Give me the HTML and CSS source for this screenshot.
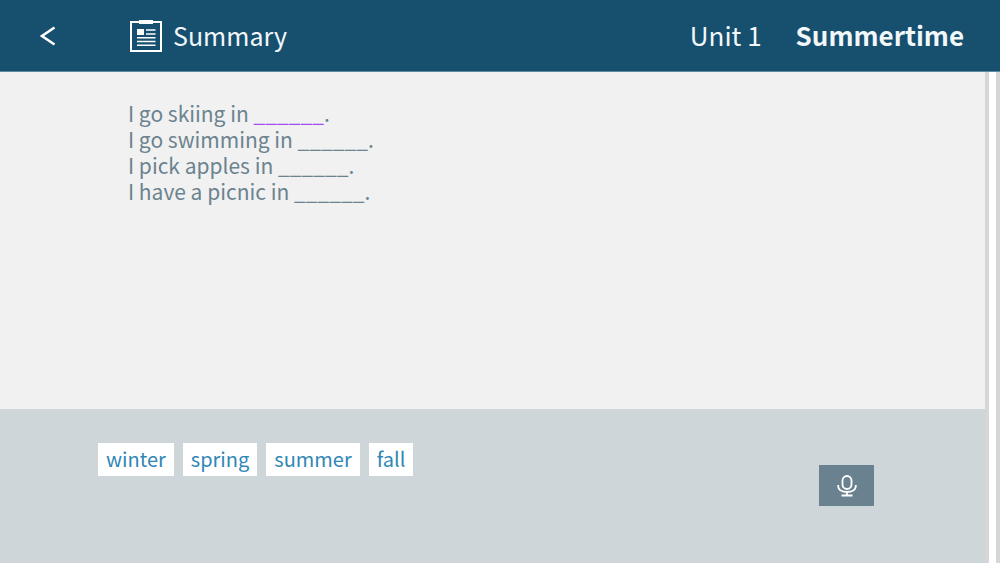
FILE: index.html
```
<!DOCTYPE html>
<html lang="en">
<head>
  <meta charset="UTF-8" />
  <meta name="viewport" content="width=device-width, initial-scale=1" />
  <title>Summary</title>
  <link rel="stylesheet" href="styles.css">
</head>
<body>

<header class="topbar">
  <a href="#" class="back" aria-label="Back">
    <svg width="18" height="20" viewBox="0 0 18 20" fill="none" stroke="#fff" stroke-width="2.6"><path d="M15.500 1.500 3 10l12.500 8.500"/></svg>
  </a>
  <h1 class="title">
    <svg width="32" height="34" viewBox="0 0 32 34">
      <path d="M1 4h30v29H1z" fill="none" stroke="#fff" stroke-width="2"/>
      <path d="M9 2h14v4H9z" fill="#fff"/>
      <path d="M7 11h7v6H7z" fill="#fff"/>
      <path d="M16 12h9.500M16 16h9.500M7 19.700h18.500M7 23.500h18.500M7 27.300h18.500" stroke="#fff" stroke-width="1.600"/>
    </svg>
    <span>Summary</span>
  </h1>
  <span class="unit">Unit 1</span>
  <strong class="unit-name">Summertime</strong>
</header>

<div class="page">
  <main class="lesson">
    <section class="sentences">
      <p>I go skiing in <button class="blank active">______</button>.</p>
      <p>I go swimming in <button class="blank">______</button>.</p>
      <p>I pick apples in <button class="blank">______</button>.</p>
      <p>I have a picnic in <button class="blank">______</button>.</p>
    </section>
    <section class="answers">
      <div class="words">
        <button class="word">winter</button>
        <button class="word">spring</button>
        <button class="word">summer</button>
        <button class="word">fall</button>
      </div>
      <button class="mic" aria-label="Record">
        <svg width="20" height="22" viewBox="0 0 20 22" fill="none" stroke="#fff" stroke-width="1.8">
          <rect x="5.5" y="1" width="9" height="13" rx="4.5"/>
          <path d="M1.200 10v1c0 4 4 6 8.800 6s8.800-2 8.800-6v-1M10 17v3.500M4.500 20.500h11"/>
        </svg>
      </button>
    </section>
  </main>
  <div class="gutter"></div>
</div>

</body>
</html>
```
FILE: styles.css
```
* {
  box-sizing: border-box;
}
body {
  display: flex;
  flex-direction: column;
  min-height: 100vh;
  margin: 0;
  font-family: "Noto Sans CJK SC", sans-serif;
  color: #6b838f;
}
button {
  border: 0;
  font: inherit;
  cursor: pointer;
}
svg {
  display: block;
}
.topbar {
  display: flex;
  align-items: center;
  height: 72px;
  padding: 0 36px 2px;
  background: #17506f;
  border-bottom: 1px solid #5f8aa0;
  color: #f2f7fa;
  font-size: 26px;
}
.back {
  width: 94px;
  padding: 2px 0 0 3px;
}
.title {
  display: flex;
  align-items: center;
  gap: 11px;
  flex: 1;
  margin: 0;
  font-size: 25px;
  font-weight: 400;
}
.unit-name {
  margin-left: 34px;
  font-weight: 700;
}
.page {
  display: flex;
  flex: 1;
}
.lesson {
  display: flex;
  flex-direction: column;
  flex: 1;
}
.sentences {
  flex: 1;
  padding: 28px 128px;
  background: #f1f1f1;
  font-size: 21px;
  line-height: 26px;
}
.sentences p {
  margin: 0;
}
.blank {
  padding: 0;
  background: none;
  color: inherit;
  line-height: 20px;
}
.active {
  color: #a04df0;
}
.answers {
  display: flex;
  justify-content: space-between;
  align-items: flex-start;
  min-height: 154px;
  padding: 34px 111px 34px 98px;
  background: #ced6d9;
}
.words {
  display: flex;
  gap: 9px;
}
.word {
  height: 33px;
  padding: 0 8px 2px;
  background: #fff;
  color: #2f87b5;
  font-size: 20px;
  line-height: 30px;
}
.mic {
  display: flex;
  align-items: center;
  justify-content: center;
  width: 55px;
  height: 41px;
  margin-top: 22px;
  padding: 0;
  background: #6a828f;
}
.gutter {
  width: 15px;
  background: #fff;
  border-left: 4px solid #d6d6d6;
  border-right: 4px solid #d6d6d6;
}
```
